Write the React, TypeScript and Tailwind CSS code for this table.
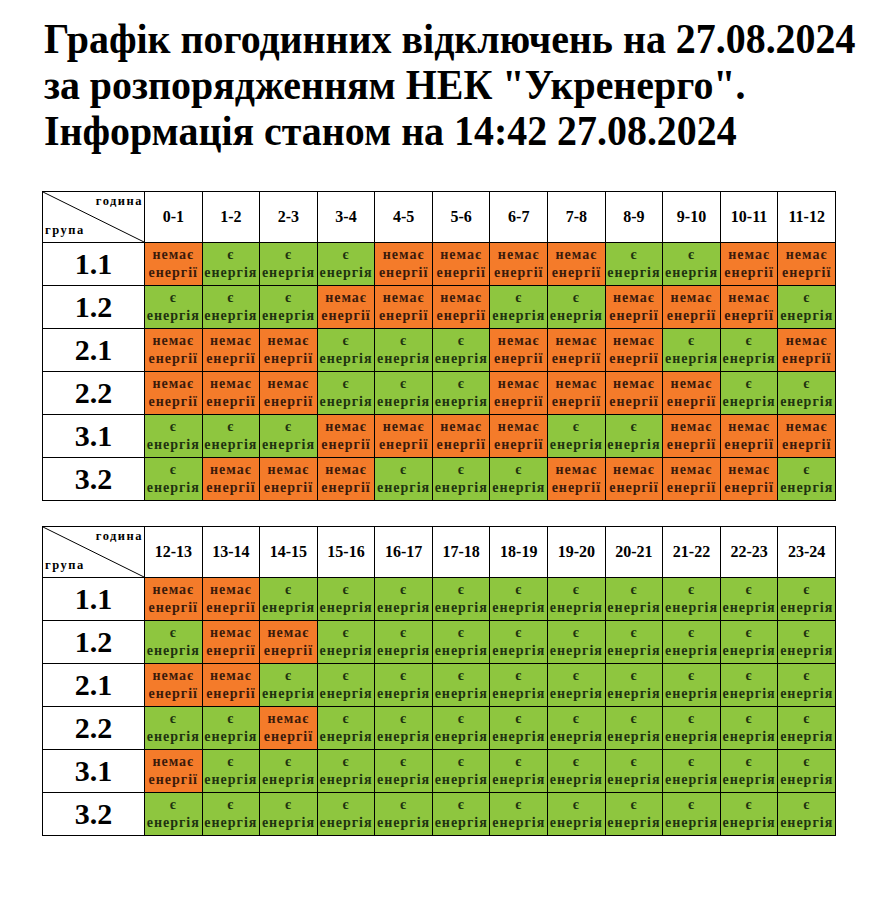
import React from "react";

type Row = { group: string; cells: boolean[] };

const hoursA = ["0-1", "1-2", "2-3", "3-4", "4-5", "5-6", "6-7", "7-8", "8-9", "9-10", "10-11", "11-12"];
const hoursB = ["12-13", "13-14", "14-15", "15-16", "16-17", "17-18", "18-19", "19-20", "20-21", "21-22", "22-23", "23-24"];

// true = є енергія, false = немає енергії
const parse = (s: string) => s.split("").map((c) => c === "Y");

const rowsA: Row[] = [
  { group: "1.1", cells: parse("NYYYNNNNYYNN") },
  { group: "1.2", cells: parse("YYYNNNYYNNNY") },
  { group: "2.1", cells: parse("NNNYYYNNNYYN") },
  { group: "2.2", cells: parse("NNNYYYNNNNYY") },
  { group: "3.1", cells: parse("YYYNNNNYYNNN") },
  { group: "3.2", cells: parse("YNNNYYYNNNNY") },
];

const rowsB: Row[] = [
  { group: "1.1", cells: parse("NNYYYYYYYYYY") },
  { group: "1.2", cells: parse("YNNYYYYYYYYY") },
  { group: "2.1", cells: parse("NNYYYYYYYYYY") },
  { group: "2.2", cells: parse("YYNYYYYYYYYY") },
  { group: "3.1", cells: parse("NYYYYYYYYYYY") },
  { group: "3.2", cells: parse("YYYYYYYYYYYY") },
];

const StatusCell = ({ on }: { on: boolean }) => (
  <td
    className={
      on
        ? "border border-black bg-[#8ec63f] text-[#1e3310] text-center align-middle p-0"
        : "border border-black bg-[#f47b2a] text-[#3b1a0a] text-center align-middle p-0"
    }
  >
    <div className="text-[14px] leading-[18px] font-bold tracking-[1px] whitespace-nowrap">
      <div>{on ? "є" : "немає"}</div>
      <div>{on ? "енергія" : "енергії"}</div>
    </div>
  </td>
);

const Schedule = ({ hours, rows }: { hours: string[]; rows: Row[] }) => (
  <table className="table-fixed border-collapse w-[794px]">
    <colgroup>
      <col className="w-[102px]" />
      {hours.map((h) => (
        <col key={h} />
      ))}
    </colgroup>
    <thead>
      <tr className="h-[51px]">
        <th className="relative border border-black p-0 font-bold">
          <svg className="absolute inset-0 w-full h-full" preserveAspectRatio="none" viewBox="0 0 100 100">
            <line x1="0" y1="0" x2="100" y2="100" stroke="black" strokeWidth="1" vectorEffect="non-scaling-stroke" />
          </svg>
          <span className="absolute right-[1px] top-[2px] text-[12.5px] leading-[14px] tracking-[1.5px]">година</span>
          <span className="absolute left-[2px] bottom-[5px] text-[12.5px] leading-[14px] tracking-[1.5px]">група</span>
        </th>
        {hours.map((h) => (
          <th key={h} className="border border-black text-[16px] font-bold text-center align-middle p-0">
            {h}
          </th>
        ))}
      </tr>
    </thead>
    <tbody>
      {rows.map((r) => (
        <tr key={r.group} className="h-[43px]">
          <td className="border border-black text-center align-middle text-[30px] leading-none font-bold p-0">{r.group}</td>
          {r.cells.map((on, i) => (
            <StatusCell key={i} on={on} />
          ))}
        </tr>
      ))}
    </tbody>
  </table>
);

export default function App() {
  return (
    <div className="w-[880px] h-[900px] bg-white text-black pl-[42px] pt-[16px] [font-family:'Liberation_Serif','Times_New_Roman',serif]">
      <h1 className="font-bold text-[42px] leading-[46px] pl-[2px] whitespace-nowrap origin-left scale-x-[0.95]">
        <div>Графік погодинних відключень на 27.08.2024</div>
        <div>за розпорядженням НЕК "Укренерго".</div>
        <div>Інформація станом на 14:42 27.08.2024</div>
      </h1>
      <div className="mt-[37px] flex flex-col gap-[25px]">
        <Schedule hours={hoursA} rows={rowsA} />
        <Schedule hours={hoursB} rows={rowsB} />
      </div>
    </div>
  );
}
